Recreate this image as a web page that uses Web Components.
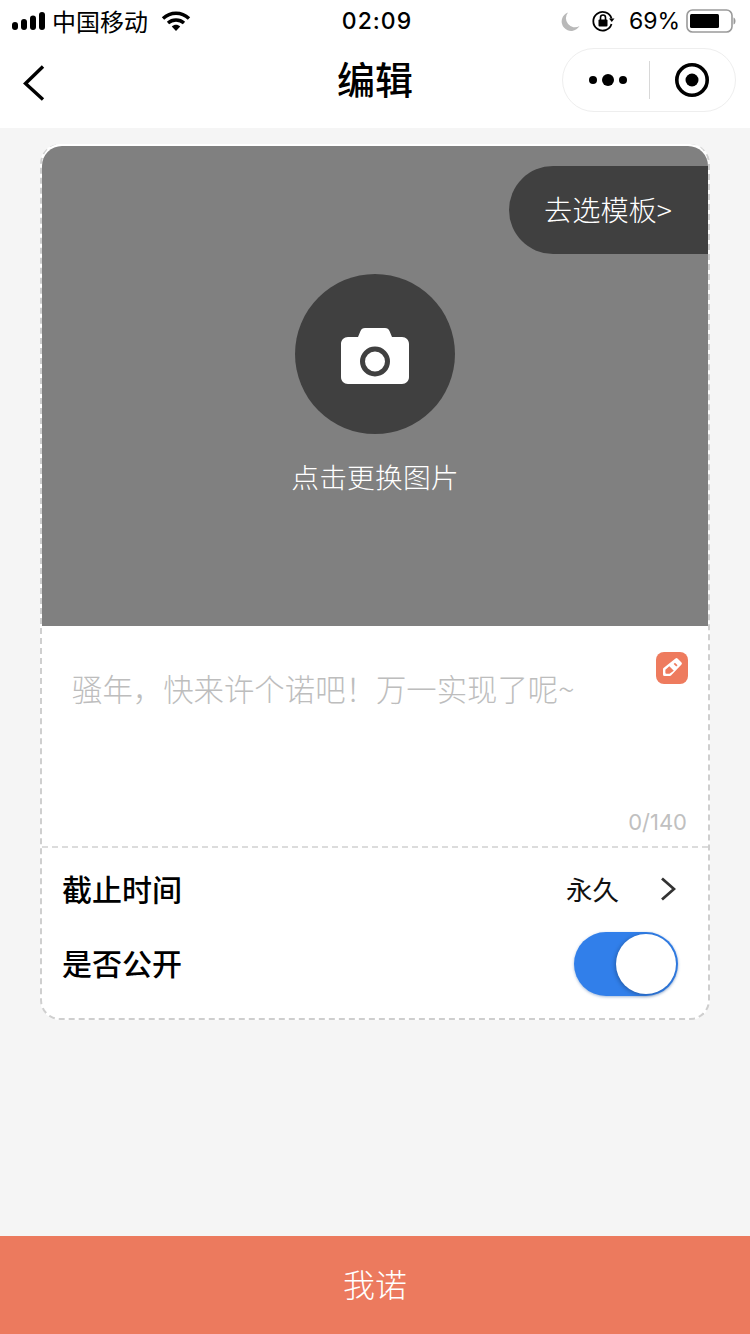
<!DOCTYPE html>
<html lang="zh"><head><meta charset="utf-8"><title>编辑</title>
<style>
html,body{margin:0;padding:0;background:#f5f5f5;}
body{font-family:Inter,"Noto Sans CJK SC",sans-serif;color:#000;}
</style></head><body>
<edit-page></edit-page>
<script>
function def(name, html){
  customElements.define(name, class extends HTMLElement{
    constructor(){super();this.attachShadow({mode:'open'}).innerHTML=html;}
  });
}
const CJK='"Noto Sans CJK SC",sans-serif';
def('status-bar',`<style>
:host{display:grid;grid-template-columns:1fr auto 1fr;align-items:center;height:40px;background:#fff;padding:2px 14px 0 11px;box-sizing:border-box;font-family:Inter,${CJK};color:#000}
.l,.r{display:flex;align-items:center}
.l{gap:5px}.r{justify-content:flex-end}
.c{font-size:23px;letter-spacing:1px;font-weight:500;line-height:38px;margin-left:7px}
.car{font:400 24px/38px ${CJK};letter-spacing:0}
.p{font-size:23px;line-height:38px;letter-spacing:0;margin:0 6px 0 14px;font-weight:400}
svg{display:block}
</style>
<div class="l"><svg width="36" height="18" viewBox="0 0 36 18"><rect x="1" y="10" width="6" height="8" rx="3"/><rect x="10" y="7" width="6" height="11" rx="3"/><rect x="19" y="3.500" width="6" height="14.500" rx="3"/><rect x="28" y="0" width="6" height="18" rx="3"/></svg><span class="car">中国移动</span><svg style="margin-left:8px" width="30" height="22" viewBox="0 0 30 22"><path d="M2 8.500C9.500 1.500 20.500 1.500 28 8.500" fill="none" stroke="#000" stroke-width="3.400"/><path d="M7 13C11.500 9 18.500 9 23 13" fill="none" stroke="#000" stroke-width="3.400"/><path d="M10.800 16.500C13.300 14.300 16.700 14.300 19.200 16.500L15 21Z"/></svg></div>
<div class="c">02:09</div>
<div class="r"><svg width="20" height="20" viewBox="0 0 20 20" style="margin-right:11px"><path d="M8 1.500A9 9 0 0 0 19.500 15A9.500 9.500 0 1 1 8 1.500Z" fill="#b9b9b9"/></svg><svg width="24" height="24" viewBox="0 0 24 24"><path d="M20.500 9.500A9.300 9.300 0 1 0 20.500 15" fill="none" stroke="#000" stroke-width="1.800"/><path d="M18 9.500h5.500l-2.700 3.500Z"/><rect x="7.500" y="10.500" width="9" height="7" rx="1"/><path d="M9.500 11V8.500a2.500 2.500 0 0 1 5 0V11" fill="none" stroke="#000" stroke-width="1.600"/></svg><span class="p">69%</span><svg width="50" height="24" viewBox="0 0 50 24"><rect x="1" y="1" width="45" height="22" rx="5.500" fill="none" stroke="#9a9a9a" stroke-width="1.600"/><rect x="4" y="5" width="29" height="14" rx="1.500"/><path d="M47.500 8.500c1.500.5 2 2 2 3.500s-.5 3-2 3.500Z" fill="#9a9a9a"/></svg></div>`);

def('nav-bar',`<style>
:host{display:grid;grid-template-columns:1fr auto 1fr;align-items:center;height:88px;background:#fff;padding:0 14px 0 22px;box-sizing:border-box}
.t{font:500 38px/1 ${CJK};color:#000;margin-left:-8px;position:relative;top:-6px}
.back{position:relative;top:-1px}
.cap{justify-self:end;display:flex;align-items:center;width:174px;height:64px;box-sizing:border-box;border:1px solid #eee;border-radius:32px;background:#fff;position:relative;top:-4px}
.cap>div{flex:1;display:flex;justify-content:center;align-items:center}
.dots{margin-left:4px}
.sep{width:1px;height:38px;background:#d8d8d8}
svg{display:block}
</style>
<svg class="back" width="24" height="38" viewBox="0 0 24 38"><path d="M21 2.500L3.500 19.500L21 35.500" fill="none" stroke="#000" stroke-width="3.400"/></svg>
<div class="t">编辑</div>
<div class="cap"><div><svg class="dots" width="38" height="14" viewBox="0 0 38 14"><circle cx="4" cy="7" r="4"/><circle cx="19" cy="7" r="6"/><circle cx="34" cy="7" r="4"/></svg></div><span class="sep"></span><div><svg width="36" height="36" viewBox="0 0 36 36"><circle cx="18" cy="18" r="15.200" fill="none" stroke="#000" stroke-width="3.600"/><circle cx="18" cy="18" r="6.500"/></svg></div></div>`);

def('cover-picker',`<style>
:host{display:flex;flex-direction:column;align-items:center;position:relative;height:480px;background:#808080;border-radius:20px 20px 0 0;padding-top:128px;box-sizing:border-box;overflow:hidden}
.tpl{position:absolute;right:0;top:20px;width:199px;height:88px;box-sizing:border-box;padding-left:35px;background:#404040;border-radius:44px 0 0 44px;color:#fff;font:300 28.200px/86px ${CJK};}
.cam{width:160px;height:160px;border-radius:50%;background:#404040;display:flex;align-items:center;justify-content:center}
.cam svg{margin-top:4px}
.txt{color:#fff;font:300 27.800px/40px ${CJK};margin-top:22px;letter-spacing:.1px}
svg{display:block}
</style>
<div class="tpl"><span>去选模板&gt;</span></div>
<div class="cam"><svg width="68" height="56" viewBox="0 0 68 56"><path d="M7 9h10l2.500-6c.8-1.800 2.200-3 4.500-3h20c2.300 0 3.700 1.200 4.500 3L51 9H61c4 0 7 3 7 7v33c0 4-3 7-7 7H7c-4 0-7-3-7-7V16c0-4 3-7 7-7Z" fill="#fff"/><circle cx="34" cy="33.500" r="12.500" fill="#fff" stroke="#404040" stroke-width="5"/></svg></div>
<div class="txt">点击更换图片</div>`);

def('wish-input',`<style>
:host{display:block;position:relative;height:222px;box-sizing:border-box;padding:39px 30px 0;background:#fff;border-bottom:2px dashed #dcdcdc}
.ph{font:300 30.400px/46px ${CJK};color:#bdbdbd;white-space:nowrap}
.ed{position:absolute;right:20px;top:26px;width:32px;height:32px;border-radius:8px;background:#ee7b5e}
.count{position:absolute;right:21px;bottom:9px;font:400 22px/30px Inter,sans-serif;color:#c0c0c0}
svg{display:block}
</style>
<div class="ph">骚年，快来许个诺吧！万一实现了呢~</div>
<div class="ed"><svg width="32" height="32" viewBox="0 0 32 32"><path d="M19.500 6.500a1.500 1.500 0 0 1 2 0L25.500 10.500a1.500 1.500 0 0 1 0 2L15 23.500a1.500 1.500 0 0 1-1 .5H8.500Q7 24 7 22.500V17a1.500 1.500 0 0 1 .5-1Z" fill="#fff"/><path d="M13.300 14.200L17.800 18.700L13.500 21.700H10.300Q9.400 21.700 9.400 20.800V17.800Z" fill="#ee7b5e"/><path d="M18.300 11.300L20.900 13.900" stroke="#ee7b5e" stroke-width="1.800"/></svg></div>
<div class="count">0/140</div>`);

def('setting-row',`<style>
:host{display:flex;align-items:center;justify-content:space-between;box-sizing:border-box;height:74px;padding:0 30px 0 20px}
.k{font:500 30px/40px ${CJK};color:#000;padding-bottom:2px}
.v{display:flex;align-items:center}
</style><div class="k"><slot name="label"></slot></div><div class="v"><slot></slot></div>`);

def('toggle-switch',`<style>
:host{display:block;position:relative;width:104px;height:64px;border-radius:32px;background:#317fea;box-shadow:0 1px 3px rgba(49,100,170,.45);margin-top:2px}
.k{position:absolute;right:2px;top:2px;width:60px;height:60px;border-radius:50%;background:#fff;box-shadow:-1px 1px 4px rgba(0,0,0,.28)}
</style><div class="k"></div>`);

def('edit-card',`<style>
:host{display:block;margin:16px 40px 0;border:2px dashed #cfcfcf;border-top:0;border-radius:20px;background:#fff;padding-top:2px;box-sizing:border-box}
.box{height:872px;display:flex;flex-direction:column}
.rows{padding-top:4px}
.val{font:400 26.500px/40px ${CJK};color:#111}
.gap{display:inline-block;width:41px}
.chev{margin-right:2px}
svg{display:block}
</style>
<div class="box"><cover-picker></cover-picker><wish-input></wish-input>
<div class="rows">
<setting-row><span slot="label">截止时间</span><span class="val">永久</span><span class="gap"></span><svg class="chev" width="16" height="24" viewBox="0 0 16 24"><path d="M2 1.500L14 12L2 22.500" fill="none" stroke="#333" stroke-width="2.800"/></svg></setting-row>
<setting-row><span slot="label">是否公开</span><toggle-switch></toggle-switch></setting-row>
</div></div>`);

def('submit-bar',`<style>
:host{display:block;height:98px;background:#ec7a5e;color:#fff;text-align:center;font:300 32px/95px ${CJK}}
</style><slot></slot>`);

def('edit-page',`<style>
:host{display:flex;flex-direction:column;height:1334px;width:750px;background:#f5f5f5;overflow:hidden}
submit-bar{margin-top:auto}
</style><status-bar></status-bar><nav-bar></nav-bar><edit-card></edit-card><submit-bar>我诺</submit-bar>`);
</script></body></html>
